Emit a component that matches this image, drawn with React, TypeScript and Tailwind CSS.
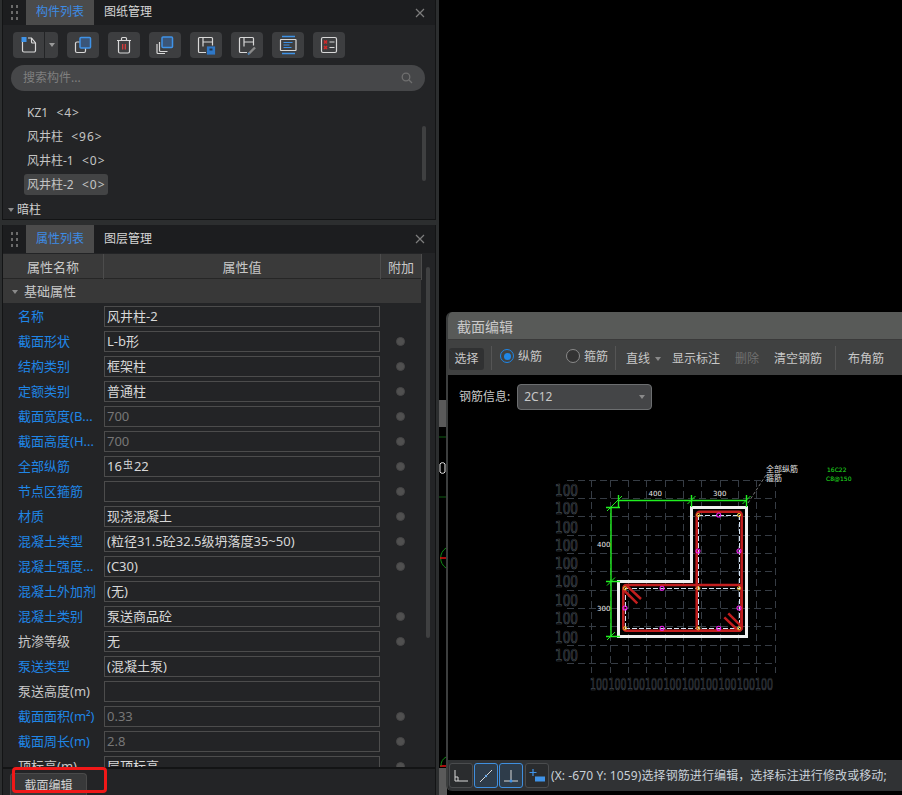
import React from "react";

const B = "#3f93e8";
const W = "#d8d8d8";

function Ico({ children }: { children: React.ReactNode }) {
  return (
    <svg width="22" height="22" viewBox="0 0 22 22" fill="none" strokeWidth="1.2" stroke={W}>
      {children}
    </svg>
  );
}

const icons = [
  <Ico key="copy">
    <rect x="3.5" y="8" width="10" height="10.5" rx="1.5" />
    <rect x="8" y="3.5" width="10.5" height="10.5" rx="1" fill="#3a5578" stroke={B} strokeWidth="1.5" />
  </Ico>,
  <Ico key="trash">
    <path d="M4 6.5h14M8.5 6.5V4.5a1 1 0 0 1 1-1h3a1 1 0 0 1 1 1v2M5.5 6.5v11a1.5 1.5 0 0 0 1.5 1.5h8a1.500 1.500 0 0 0 1.5-1.5v-11" />
    <path d="M9.7 10v5.5M12.3 10v5.5" stroke="#e33c3c" />
  </Ico>,
  <Ico key="stack">
    <path d="M3 10v8.5a1 1 0 0 0 1 1h7M5.5 8v8.5a1 1 0 0 0 1 1h7" />
    <rect x="8" y="3" width="10.5" height="10.5" rx="1" fill="#3a5578" stroke={B} strokeWidth="1.5" />
  </Ico>,
  <Ico key="save">
    <path d="M11 18.5H4.5a1 1 0 0 1-1-1v-13a1 1 0 0 1 1-1h12a1 1 0 0 1 1 1v7" />
    <path d="M8 3.5v9M8 8h9.5" />
    <rect x="12.5" y="13" width="7" height="7" fill="#2f78c8" stroke="#2f78c8" />
    <rect x="14.5" y="14.5" width="3" height="2" fill="#22354a" stroke="none" />
  </Ico>,
  <Ico key="dropper">
    <path d="M11 18.5H4.5a1 1 0 0 1-1-1v-13a1 1 0 0 1 1-1h12a1 1 0 0 1 1 1v7" />
    <path d="M8 3.5v9M8 8h9.5" />
    <path d="M13 19.5l6-6" stroke="#8a8a8a" strokeWidth="2.4" />
    <path d="M12 20.5l1.5-1.5" stroke="#4f80b0" strokeWidth="2" />
  </Ico>,
  <Ico key="text">
    <path d="M5 2.500h13M5 19.500h13" stroke={B} strokeWidth="1.4" />
    <rect x="3.5" y="5.500" width="15.500" height="11" rx="0.5" />
    <path d="M6.5 8.500h9M6.5 11h6M6.5 13.500h8" stroke={B} />
  </Ico>,
  <Ico key="errs">
    <rect x="3.5" y="3.5" width="15" height="15" rx="1.5" />
    <path d="M6 6.5l3 3M9 6.5l-3 3M6 12l3 3M9 12l-3 3" stroke="#d22a2a" strokeWidth="1.6" />
    <path d="M11.5 8h5M11.500 13.500h5" />
  </Ico>,
];

function Caret({ cls = "" }: { cls?: string }) {
  return <span className={`inline-block w-0 h-0 border-l-[3.5px] border-r-[3.5px] border-t-[4px] border-l-transparent border-r-transparent ${cls}`} />;
}

function Grip() {
  return (
    <div className="w-[23px] flex justify-center">
      <div className="grid grid-cols-2 gap-x-[3px] gap-y-[3px]">
        {Array.from({ length: 6 }).map((_, i) => (
          <span key={i} className="w-[2px] h-[3px] bg-[#6a6a6a]" />
        ))}
      </div>
    </div>
  );
}

function TabBar({ a, b, h }: { a: string; b: string; h: string }) {
  return (
    <div className={`flex items-center bg-[#1c1d1f] ${h} shrink-0 text-[12px]`}>
      <Grip />
      <div className="h-full w-[68px] bg-[#4b4b4b] text-[#3d8ce6] flex items-center justify-center pb-[1px]">{a}</div>
      <div className="w-[68px] text-center text-[#d6d6d6] pb-[1px]">{b}</div>
      <div className="flex-1" />
      <svg width="10" height="10" viewBox="0 0 10 10" className="mr-[10px]" stroke="#7d7d7d" strokeWidth="1.2">
        <path d="M1 1l8 8M9 1l-8 8" />
      </svg>
    </div>
  );
}

type Row = { l: string; v: string; blue?: boolean; dot?: boolean; dim?: boolean };
const rows: Row[] = [
  { l: "名称", v: "风井柱-2", blue: true },
  { l: "截面形状", v: "L-b形", blue: true, dot: true },
  { l: "结构类别", v: "框架柱", blue: true, dot: true },
  { l: "定额类别", v: "普通柱", blue: true, dot: true },
  { l: "截面宽度(B...", v: "700", blue: true, dot: true, dim: true },
  { l: "截面高度(H...", v: "700", blue: true, dot: true, dim: true },
  { l: "全部纵筋", v: "REBAR", blue: true, dot: true },
  { l: "节点区箍筋", v: "", blue: true, dot: true },
  { l: "材质", v: "现浇混凝土", blue: true, dot: true },
  { l: "混凝土类型", v: "(粒径31.5砼32.5级坍落度35~50)", blue: true, dot: true },
  { l: "混凝土强度...", v: "(C30)", blue: true, dot: true },
  { l: "混凝土外加剂", v: "(无)", blue: true },
  { l: "混凝土类别", v: "泵送商品砼", blue: true, dot: true },
  { l: "抗渗等级", v: "无", dot: true },
  { l: "泵送类型", v: "(混凝土泵)", blue: true },
  { l: "泵送高度(m)", v: "" },
  { l: "截面面积(m²)", v: "0.33", blue: true, dot: true, dim: true },
  { l: "截面周长(m)", v: "2.8", blue: true, dot: true, dim: true },
  { l: "顶标高(m)", v: "层顶标高", dot: true },
];

function PropRow({ r }: { r: Row }) {
  return (
    <div className="grid grid-cols-[101px_276px_41px] h-[25px] items-center shrink-0">
      <div className={`pl-[15px] whitespace-nowrap ${r.blue ? "text-[#1f86e6]" : "text-[#c8c8c8]"}`}>{r.l}</div>
      <div className={`h-[21px] border border-[#4c4c4c] px-[2px] leading-[19px] whitespace-nowrap ${r.dim ? "text-[#777777]" : "text-[#d8d8d8]"}`}>
        {r.v === "REBAR" ? (
          <span>
            16<span className="text-[10px] relative -top-[3px] mx-[1px]">虫</span>22
          </span>
        ) : (
          r.v
        )}
      </div>
      <div className="flex justify-center">
        {r.dot && <span className="w-[9px] h-[9px] rounded-full bg-[#505050] border border-[#474747]" />}
      </div>
    </div>
  );
}

const hy = [480.5, 498.5, 516.5, 535.5, 553.5, 571.5, 590.5, 608.5, 626.5, 645.5, 663.5];
const vx = [591.5, 610.5, 628.5, 646.5, 665.5, 683.5, 701.5, 720.5, 738.5, 756.5, 775.5];
const yellow = [[698.3, 515], [739, 515], [698.3, 588.3], [739, 588.3], [625, 588.3], [625, 628.3], [698.3, 628.3], [739, 628.3]];
const mag = [[718.7, 515], [698, 551], [739, 551], [662, 588.3], [625, 608], [739, 608], [662, 628.3], [718.7, 628.3]];

function Drawing() {
  return (
    <svg width="454" height="385" viewBox="448 375 454 385" className="absolute left-0 top-0" fill="none">
      <g stroke="#363c44" strokeDasharray="7 4" shapeRendering="crispEdges">
        {hy.map((y) => <path key={y} d={`M567 ${y}H775`} />)}
        {vx.map((x) => <path key={x} d={`M${x} 480V673`} />)}
      </g>
      <g fontFamily="'DejaVu Sans',sans-serif" fontSize="15" stroke="#464d56" strokeWidth="0.7" fill="none">
        {[496, 514, 533, 551, 569, 587, 606, 624, 643, 661].map((y) => (
          <text key={y} x="555" y={y} textLength="23" lengthAdjust="spacingAndGlyphs">100</text>
        ))}
        {[590, 608.5, 627, 645, 663.5, 682, 700, 718.5, 737, 755].map((x) => (
          <text key={x} x={x} y="690" textLength="18" lengthAdjust="spacingAndGlyphs">100</text>
        ))}
      </g>
      <path d="M748 503L766 475" stroke="#777" strokeDasharray="3 2" />
      <path d="M618.5 581.5H691.5V507.5H746.5V636.5H618.5Z" stroke="#f0f0f0" strokeWidth="3" />
      <g stroke="#d5e6f5" strokeWidth="1" strokeDasharray="5 2" shapeRendering="crispEdges">
        <path d="M698.5 515V628M739.500 515V628M698 515.5H739M625 588.5H739M625 628.5H739M625.500 588.3V628" />
      </g>
      <g stroke="#c21e1e" strokeWidth="2.5">
        <rect x="696.7" y="511.7" width="45" height="119" rx="3" />
        <rect x="623.3" y="585" width="118.4" height="45.7" rx="3" />
        <path d="M626.7 585.7L641 599M622.700 589L637.3 603.3M728.3 613.3L742.7 627.7M724.3 617.3L738.7 631" />
      </g>
      {yellow.map(([x, y], i) => <circle key={i} cx={x} cy={y} r="1.6" stroke="#e8c030" strokeWidth="1" />)}
      {mag.map(([x, y], i) => <circle key={i} cx={x} cy={y} r="2" stroke="#f020f0" strokeWidth="1.1" />)}
      <g stroke="#20f020" strokeWidth="1.4">
        <path d="M618 500.500H747M611 507V636M606 507.500H620M606 581.500H620M606 636.500H620" />
        <path d="M618.500 495V507M691.500 495V507M746.500 495V507" />
      </g>
      <path d="M614 504L622 496M687.500 504L695.500 496M742.500 504L750.500 496M607 511L615 503M607 585.500L615 577.500M607 640L615 632" stroke="#20f020" />
      <g fontFamily="'DejaVu Sans',sans-serif" fontSize="7" fill="#e8e8e8">
        <text x="648.5" y="496">400</text>
        <text x="713" y="496">300</text>
        <text x="597" y="547">400</text>
        <text x="597" y="611">300</text>
      </g>
      <g fontFamily="'Noto Sans CJK SC',sans-serif" fontSize="8" fill="#e0e0e0">
        <text x="766" y="472">全部纵筋</text>
        <text x="766" y="481">箍筋</text>
      </g>
      <g fontFamily="'DejaVu Sans',sans-serif" fontSize="6" fill="#22e622">
        <text x="827" y="472">16C22</text>
        <text x="826" y="481">C8@150</text>
      </g>
    </svg>
  );
}

function Radio({ on, label, w }: { on?: boolean; label: string; w: string }) {
  return (
    <div className={`flex items-center gap-[4px] mb-[3px] ${w}`}>
      <span className={`w-[14px] h-[14px] rounded-full border flex items-center justify-center ${on ? "border-[#1f86e6] border-[1.5px]" : "border-[#8a8a8a] bg-[#333333]"}`}>
        {on && <span className="w-[7px] h-[7px] rounded-full bg-[#1f86e6]" />}
      </span>
      <span className="relative top-[1px]">{label}</span>
    </div>
  );
}

const Sep = () => <span className="w-px h-[24px] bg-[#555555]" />;

function StatusBtn({ on, children }: { on?: boolean; children: React.ReactNode }) {
  return (
    <div className={`w-[24px] h-[25px] rounded-[3px] border flex items-center justify-center ${on ? "border-[#3f8fdf] bg-[#2e3c4a]" : "border-[#4a4c4e] bg-[#2a2c2e]"}`}>
      <svg width="20" height="20" viewBox="0 0 20 20" fill="none" stroke="#d8d8d8" strokeWidth="1">
        {children}
      </svg>
    </div>
  );
}

function Count({ n }: { n: string }) {
  return <span className="tracking-[1px]">{`  <${n}>`}</span>;
}

export default function App() {
  return (
    <div className="relative w-[902px] h-[795px] overflow-hidden bg-black flex text-[13px] font-['Noto_Sans','Noto_Sans_CJK_SC',sans-serif]">
      {/* left column */}
      <div className="w-[439px] h-full shrink-0 bg-[#2c2e2f] pl-[2px] pr-[3px] flex flex-col">
        <div className="h-[220px] shrink-0 bg-[#232426] border-r border-b border-l border-[#131415] flex flex-col">
          <TabBar a="构件列表" b="图纸管理" h="h-[25px]" />
          <div className="flex pl-[10px] pt-[7px] gap-[9px]">
            <div className="flex h-[26px] w-[45px] rounded-[4px] bg-[#3d3e40] overflow-hidden">
              <div className="w-[32px] flex items-center justify-center border-r border-[#232426]">
                <svg width="18" height="18" viewBox="0 0 18 18" fill="none" stroke={W} strokeWidth="1.2">
                  <path d="M2.5 5v9.5a1.5 1.5 0 0 0 1.5 1.5h10a1.5 1.5 0 0 0 1.5-1.5V7L11.5 2H8" />
                  <path d="M11.5 2v4a1 1 0 0 0 1 1h3" />
                  <rect x="1.5" y="1" width="5" height="5" fill="#3f93e8" stroke="none" />
                </svg>
              </div>
              <div className="flex-1 flex items-center justify-center">
                <Caret cls="border-t-[#9a9a9a]" />
              </div>
            </div>
            {icons.map((ic, i) => (
              <div key={i} className="w-[32px] h-[26px] rounded-[4px] bg-[#3d3e40] flex items-center justify-center">
                {ic}
              </div>
            ))}
          </div>
          <div className="ml-[8px] w-[414px] mt-[7px] h-[26px] rounded-full bg-[#464749] flex items-center pl-[12px] pr-[12px] text-[12px] text-[#7f7f7f]">
            <span className="flex-1">搜索构件...</span>
            <svg width="12" height="12" viewBox="0 0 12 12" fill="none" stroke="#6f6f6f" strokeWidth="1.3">
              <circle cx="5" cy="5" r="3.8" />
              <path d="M8 8l3 3" />
            </svg>
          </div>
          <div className="relative flex-1 overflow-hidden text-[12px] text-[#c4c4c4]">
            <div className="pt-[10px] pl-[21px] flex flex-col items-start">
              <div className="h-[24px] px-[3px] leading-[24px] whitespace-pre">KZ1<Count n="4" /></div>
              <div className="h-[24px] px-[3px] leading-[24px] whitespace-pre">风井柱<Count n="96" /></div>
              <div className="h-[24px] px-[3px] leading-[24px] whitespace-pre">风井柱-1<Count n="0" /></div>
              <div className="h-[21px] mt-[1px] pl-[3px] pr-[2px] leading-[21px] rounded-[3px] bg-[#434445] whitespace-pre">风井柱-2<Count n="0" /></div>
            </div>
            <div className="flex items-center gap-[3px] pl-[5px] mt-[3px] h-[24px] text-[#d0d0d0]">
              <Caret cls="border-t-[#8a8a8a]" />
              <span>暗柱</span>
            </div>
            <div className="absolute left-[419px] top-[35px] w-[4px] h-[55px] rounded-full bg-[#3f4041]" />
          </div>
        </div>
        <div className="h-[5px] shrink-0" />
        <div className="h-[543px] shrink-0 bg-[#232426] border border-[#131415] border-t-0 flex flex-col relative overflow-hidden">
          <TabBar a="属性列表" b="图层管理" h="h-[28px]" />
          <div className="w-[419px] h-[25px] mt-[1px] grid grid-cols-[101px_277px_41px] bg-[#3a3a3a] border-b border-[#262626] text-[#c8c8c8] text-center leading-[26px] shrink-0">
            <div className="border-r border-[#4c4c4c]">属性名称</div>
            <div className="border-r border-[#4c4c4c]">属性值</div>
            <div className="border-r border-[#4c4c4c]">附加</div>
          </div>
          <div className="w-[418px] h-[24px] flex items-center gap-[6px] pl-[9px] pt-[2px] bg-[#383838] text-[#c8c8c8] shrink-0">
            <Caret cls="border-t-[#8a8a8a]" />
            <span>基础属性</span>
          </div>
          <div className="pt-[1px] flex flex-col">
            {rows.map((r) => (
              <PropRow key={r.l} r={r} />
            ))}
          </div>
          <div className="absolute left-[423px] top-[42px] w-[4px] h-[371px] rounded-full bg-[#3f4041]" />
        </div>
        <div className="flex-1 bg-[#232426] border-x border-t border-[#131415] pl-[7px] pt-[4px] overflow-hidden">
          <div className="w-[77px] h-[24px] rounded-t-[4px] border border-b-0 border-[#4a4a4a] bg-[#38393a] text-[12px] text-[#d0d0d0] text-center leading-[23px]">截面编辑</div>
        </div>
      </div>

      {/* background canvas behind the floating window */}
      <div className="flex-1 relative">
        <svg width="8" height="395" viewBox="0 0 8 395" className="absolute left-0 top-[400px]" fill="none">
          <rect x="0" y="0" width="7" height="27" fill="#5a5a5a" />
          <path d="M0 37H7M0 97H7" stroke="#0f5c12" />
          <path d="M1 64a3 3 0 0 1 5 0v8a3 3 0 0 1-5 0Z" stroke="#e8e8e8" />
          <path d="M7 148A12 12 0 0 0 7 168" stroke="#0f8a14" />
          <path d="M1 158H7M1 366H7" stroke="#e01010" strokeWidth="1.5" />
          <path d="M7 357A10 10 0 0 0 2 366" stroke="#0f8a14" />
          <rect x="0" y="368" width="8" height="27" fill="#5a5a5a" />
        </svg>
      </div>

      {/* floating window */}
      <div className="absolute left-[446px] top-[312px] w-[456px] h-[479px] flex flex-col border-l-2 border-[#3c3e3e] rounded-tl-[6px] rounded-bl-[6px] overflow-hidden bg-black">
        <div className="h-[28px] shrink-0 bg-[#585a58] text-[14px] text-[#c8c8c8] pl-[9px] leading-[29px] border-b border-[#3a3a3a]">截面编辑</div>
        <div className="h-[35px] shrink-0 bg-[#404141] flex items-center pl-[1px] text-[12px] text-[#c8c8c8] whitespace-nowrap">
          <div className="w-[35px] h-[22px] mt-[3px] rounded-[3px] bg-[#303132] text-center leading-[22px]">选择</div>
          <span className="w-[7px]" />
          <Sep />
          <span className="w-[8px]" />
          <Radio on label="纵筋" w="w-[66px]" />
          <Radio label="箍筋" w="w-[49px]" />
          <Sep />
          <span className="w-[10px]" />
          <div className="flex items-center gap-[5px] w-[46px] mt-[3px]">
            直线 <Caret cls="border-t-[#8a8a8a]" />
          </div>
          <span className="mt-[3px]">显示标注</span>
          <span className="ml-[15px] mt-[3px] text-[#707070]">删除</span>
          <span className="ml-[15px] mt-[3px]">清空钢筋</span>
          <span className="w-[13px]" />
          <Sep />
          <span className="ml-[12px] mt-[3px]">布角筋</span>
        </div>
        <div className="relative flex-1 bg-black">
          <Drawing />
          <div className="absolute left-[11px] top-[9px] flex items-center gap-[7px] text-[12px] text-[#c8c8c8]">
            <span>钢筋信息:</span>
            <div className="w-[135px] h-[26px] bg-[#444547] border border-[#6c6e70] rounded-[4px] flex items-center justify-between pl-[6px] pr-[6px] text-[#c8c8c8]">
              <span>2C12</span>
              <Caret cls="border-t-[#8a8a8a]" />
            </div>
          </div>
        </div>
        <div className="h-[31px] shrink-0 bg-[#303234] flex items-center pl-[1px] gap-px text-[12px] tracking-[0.1px] text-[#c8d0d8] whitespace-nowrap">
          <StatusBtn>
            <path d="M4 4v11h13M4 11h3v4" />
          </StatusBtn>
          <StatusBtn on>
            <path d="M4 16L16 4" />
            <circle cx="10" cy="10" r="1.2" fill="#6aa8e8" stroke="none" />
          </StatusBtn>
          <StatusBtn on>
            <path d="M10 4v11M3 15h14" />
            <circle cx="10" cy="15" r="1.5" fill="#3f93e8" stroke="none" />
          </StatusBtn>
          <div className="w-[24px] h-[25px] ml-[1px] rounded-[3px] border border-[#4a4c4e] bg-[#2a2c2e] flex items-center justify-center">
            <svg width="20" height="20" viewBox="0 0 20 20" fill="none" stroke="#3f93e8" strokeWidth="1.2">
              <path d="M6 3v7M2.5 6.500h7" />
              <rect x="8" y="10.500" width="10" height="5" fill="#3f93e8" stroke="none" />
            </svg>
          </div>
          <span className="ml-[1px]">(X: -670 Y: 1059)选择钢筋进行编辑，选择标注进行修改或移动;</span>
        </div>
      </div>

      {/* red annotation over the tab */}
      <div className="absolute left-[12px] top-[767px] w-[95px] h-[26px] border-[3px] border-[#f01818] rounded-[4px] pointer-events-none" />
    </div>
  );
}
